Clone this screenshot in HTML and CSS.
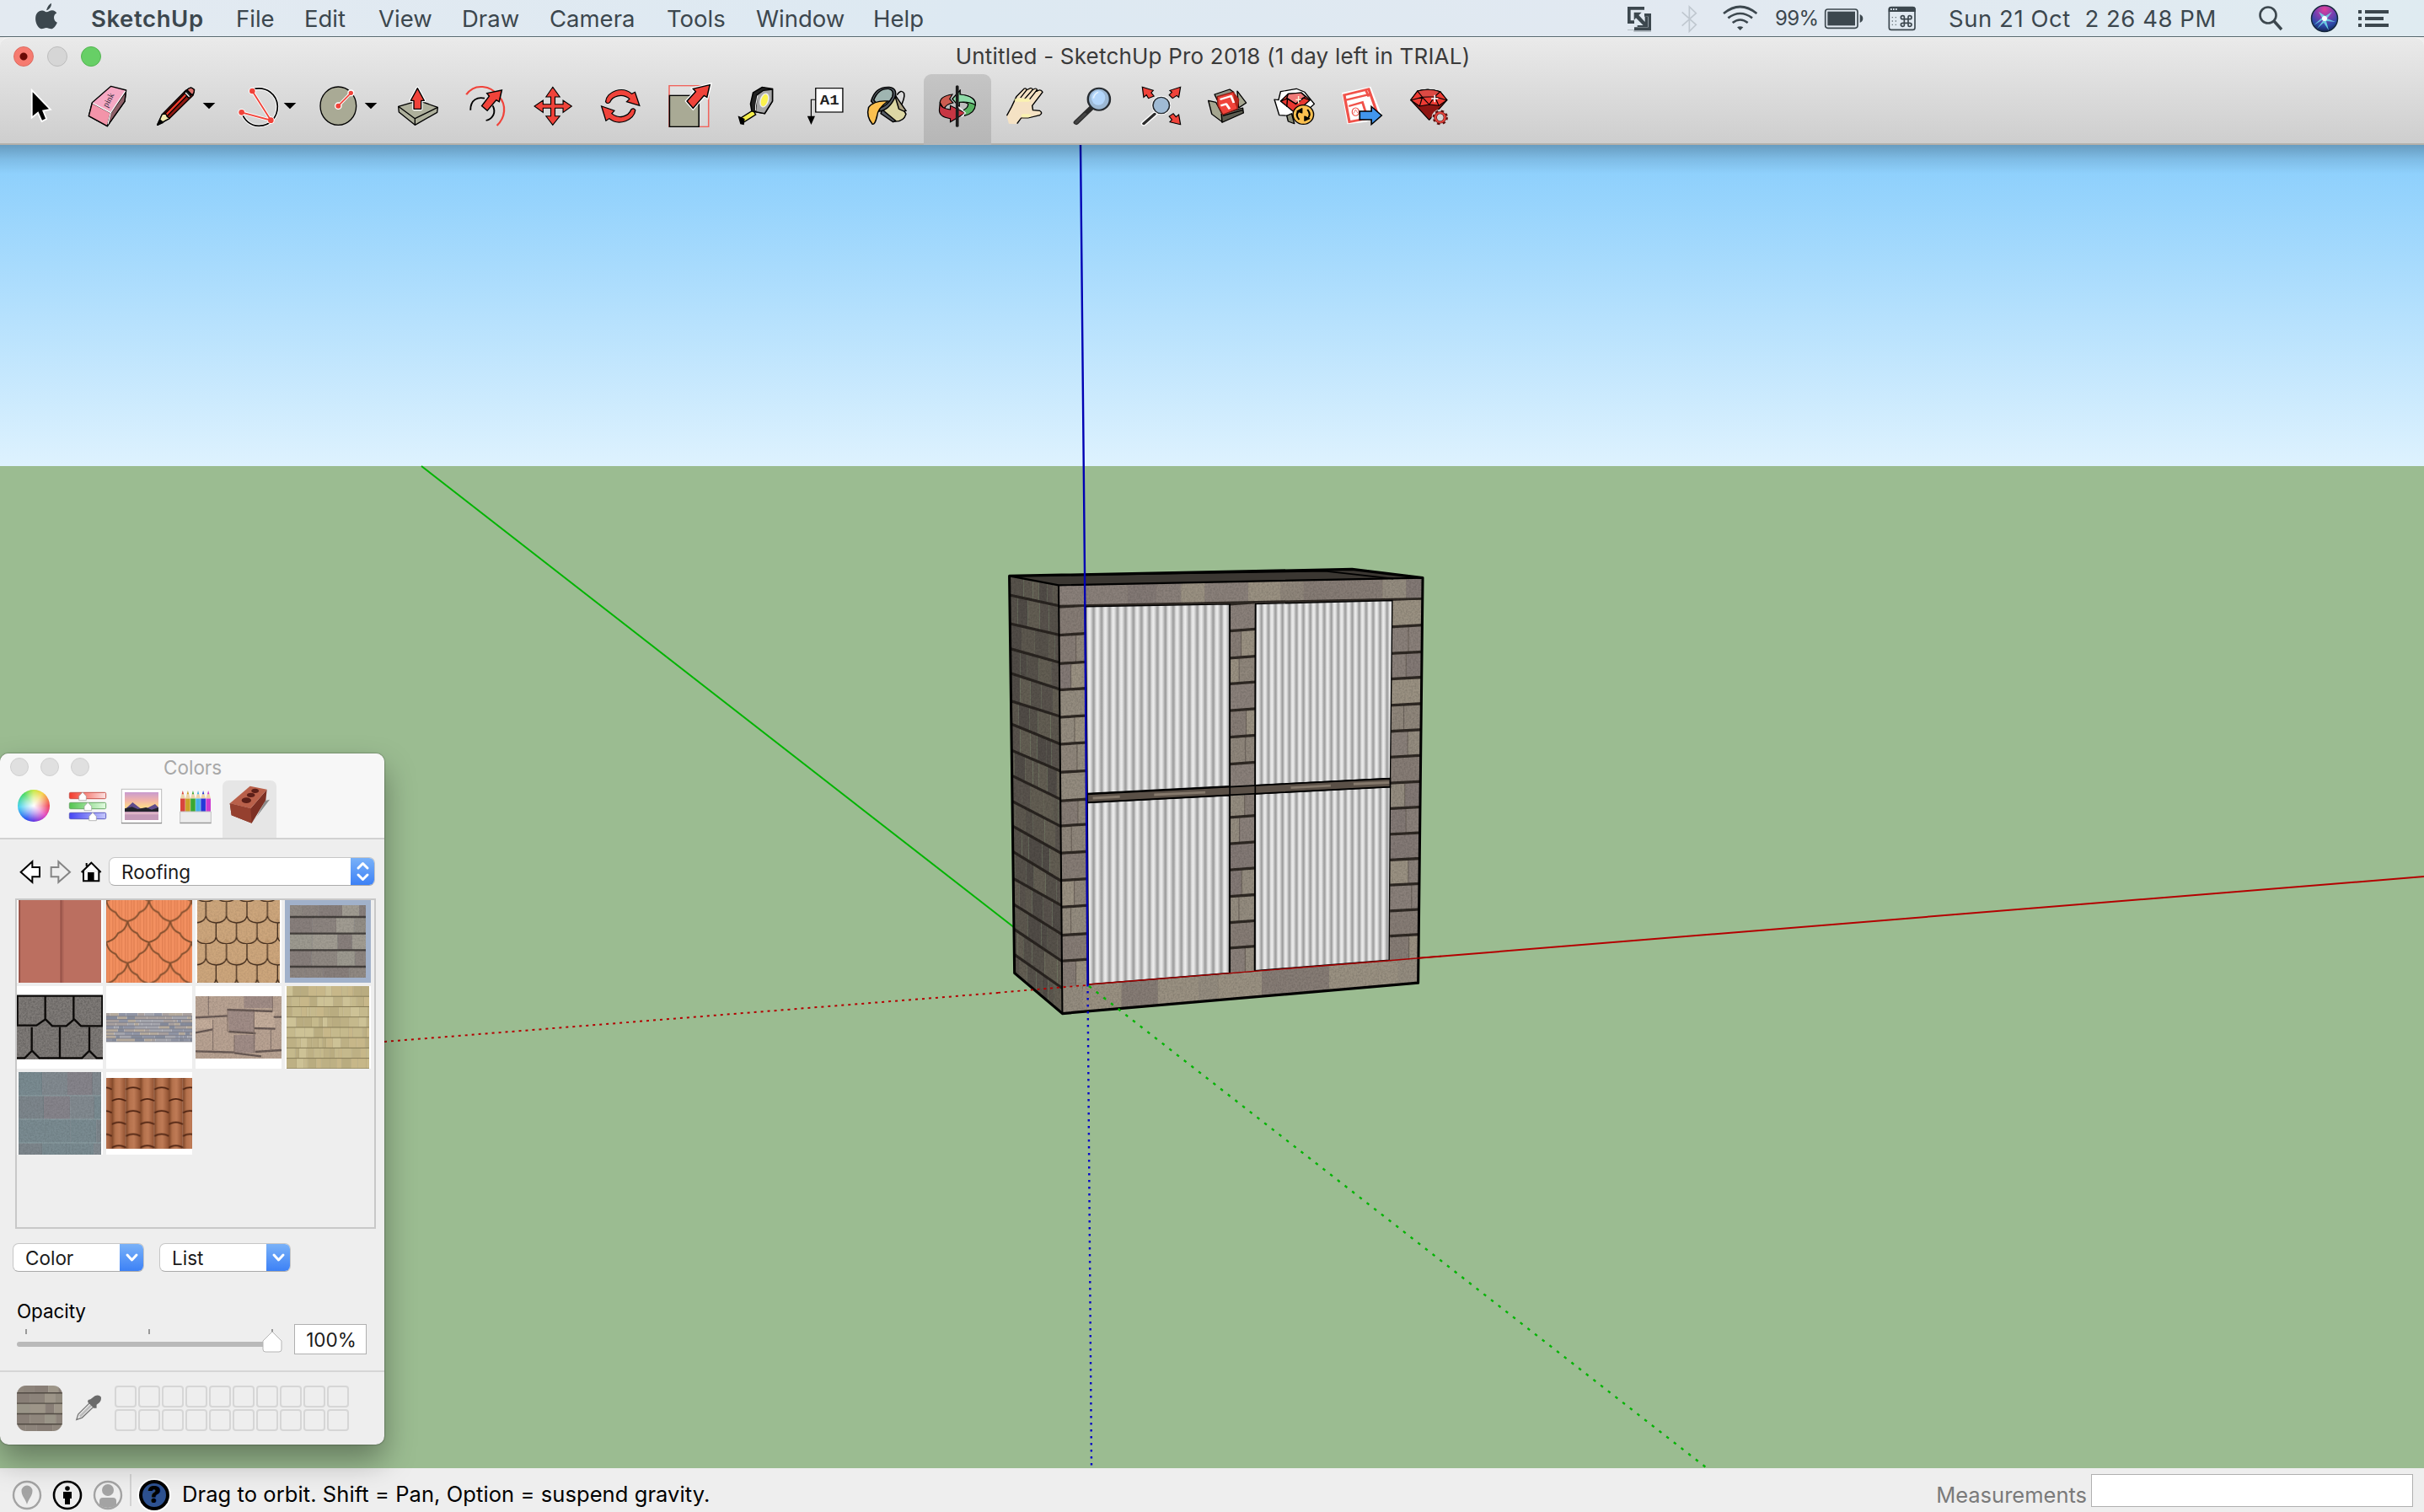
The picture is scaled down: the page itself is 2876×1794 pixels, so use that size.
FILE: index.html
```html
<!DOCTYPE html>
<html lang="en">
<head>
<meta charset="utf-8">
<title>Untitled - SketchUp Pro 2018</title>
<link rel="stylesheet" href="styles.css">
</head>
<body>
<header class="menubar">
  <svg class="apple" viewBox="72 10 48 100" preserveAspectRatio="none"><path d="M96 38C98 24 102 16 106 12C107 24 102 36 96 38ZM96 44C100 44 103 38 108 38C112 38 115 42 117 48C109 54 110 76 118 82C116 92 111 105 106 105C102 105 100 101 96 101C92 101 90 105 86 105C79 103 73 82 74 64C75 46 82 38 88 39C91 39 94 44 96 44Z"/></svg>
  <nav class="menus"><b>SketchUp</b><span>File</span><span>Edit</span><span>View</span><span>Draw</span><span>Camera</span><span>Tools</span><span>Window</span><span>Help</span></nav>
  <div class="extras">
    <svg class="x-par" viewBox="84 0 96 129"><g fill="#3c474e"><path d="M90 84V108H112V113H174V106H90Z" opacity=".35"/><path fill-rule="evenodd" d="M90 24H150V48H174V108H114V84H90ZM101 35V73H114V97H163V59H150V35Z"/><path d="M114 48H126L153 76V59H164V97H126L114 84Z" fill="#dfe9f1"/><path d="M113 44H140L130 54L152 78V58L163 59V97H125V90H146L120 64L113 72Z"/></g></svg>
    <svg class="x-bt" viewBox="278 0 63 129"><path d="M283 43L333 88L309 112V24L333 47L283 92" fill="none" stroke="#c0c8d0" stroke-width="5"/></svg>
    <svg class="x-wifi" viewBox="424 0 132 129"><g fill="none" stroke="#3c474e" stroke-width="8"><path d="M430 48Q489 0 548 48"/><path d="M446 64Q489 32 532 64"/><path d="M462 81Q489 60 516 81"/></g><path d="M478 97Q489 90 500 97L489 108Z" fill="#3c474e"/></svg>
    <span class="pct">99%</span>
    <svg class="x-bat" viewBox="790 0 144 129"><rect x="795" y="33" width="115" height="67" rx="9" fill="none" stroke="#3c474e" stroke-width="5"/><rect x="803" y="41" width="98" height="50" fill="#3c474e"/><path d="M918 51Q929 56 929 66Q929 76 918 81Z" fill="#3c474e"/></svg>
    <svg class="x-key" viewBox="1018 0 102 129"><rect x="1022" y="26" width="92" height="80" rx="8" fill="none" stroke="#3c474e" stroke-width="5"/><path d="M1020 42V32Q1020 24 1028 24H1108Q1116 24 1116 32V42Z" fill="#3c474e"/><path d="M1027 33h24" stroke="#dfe9f1" stroke-width="6" stroke-dasharray="5 4"/><path d="M1034 60v32M1046 60v32" stroke="#6d777d" stroke-width="4" stroke-dasharray="4 9"/><path fill="none" stroke="#3c474e" stroke-width="5" d="M1076 58V91Q1076 94 1071 94Q1064 94 1064 88Q1064 82 1071 82H1095Q1102 82 1102 88Q1102 94 1095 94Q1090 94 1090 89V62Q1090 56 1095 56Q1102 56 1102 62Q1102 68 1095 68H1071Q1064 68 1064 62Q1064 56 1071 56Q1076 56 1076 60"/></svg>
    <time class="clock">Sun 21 Oct&nbsp; 2 26 48 PM</time>
    <svg class="x-find" viewBox="0 0 34 43"><circle cx="14" cy="18" r="9.5" fill="none" stroke="#3c474e" stroke-width="2.6"/><path d="M21 25L30 35" stroke="#3c474e" stroke-width="3.4"/></svg>
    <svg class="x-siri" viewBox="0 0 34 43"><defs><radialGradient id="siri" cx=".5" cy=".15" r=".9"><stop offset="0" stop-color="#e0409c"/><stop offset=".4" stop-color="#7a3fb0"/><stop offset=".7" stop-color="#2a4aa8"/><stop offset="1" stop-color="#111c44"/></radialGradient></defs><circle cx="17" cy="22" r="15.5" fill="url(#siri)" stroke="#14283c" stroke-width="1.5"/><path d="M17 22L4 30L14 21L10 14L18 19L26 14L20 22L30 26L19 25L22 36L16 27L8 34Z" fill="#6fe0ea" opacity=".85"/><circle cx="17" cy="22" r="3" fill="#fff"/></svg>
    <svg class="x-list" viewBox="0 0 36 43"><g fill="#3c474e"><path d="M0 12h4v4h-4zM0 20h4v4h-4zM0 28h4v4h-4zM8 12h28v4H8zM8 20h22v4H8zM8 28h28v4H8z"/></g></svg>
  </div>
</header>

<section class="window-head">
  <div class="titlebar">
    <div class="lights"><i class="close"></i><i class="mini"></i><i class="full"></i></div>
    <h1>Untitled - SketchUp Pro 2018 (1 day left in TRIAL)</h1>
  </div>
  <div class="toolbar">
    <svg class="tool" viewBox="-36 0 240 252"><path d="M56 64V149L76 133L90 164L102 158L90 128L114 124Z" stroke="#fff" stroke-width="11"/><path d="M56 64V149L76 133L90 164L102 158L90 128L114 124Z"/></svg>
    <svg class="tool" viewBox="204 0 240 252" stroke="#000" stroke-width="4" stroke-linejoin="round"><path d="M335 43L389 57L384 97L322 185L256 149L268 101Z" fill="#f6a9c4"/><path d="M268 103L334 138L322 185L256 149Z" fill="#f394a9"/><path d="M334 138L388 62L384 97L322 185Z" fill="#8d6068"/><path d="M270 103L334 137L386 60M334 137L324 178" stroke="#fff" fill="none"/><text class="pink" transform="translate(322 120) rotate(-62)" stroke="none">pink</text></svg>
    <svg class="tool wide" viewBox="444 0 288 252" stroke="#000" stroke-width="4" stroke-linejoin="round"><path d="M500 181L517 143L602 57L620 48L632 56L628 74L544 157Z" fill="#8e1a12"/><path d="M522 146L606 60L614 68L532 152Z" fill="#ee3a2b"/><path d="M500 181L517 143L530 141L535 151L544 157Z" fill="#f3ebb2"/><path d="M500 181L509 162L521 172Z" fill="#000"/><path d="M596 64L606 58L620 72L610 84Z" fill="#222"/><path d="M600 66L614 80" stroke="#fff"/><path d="M606 56Q618 42 630 54Q634 64 624 74Z" fill="#d8716c"/><path d="M662 102H706L684 124Z" fill="#000" stroke="none"/></svg>
    <svg class="tool wide" viewBox="732 0 288 252" fill="none"><path d="M838 54C890 40 926 74 928 114C928 150 904 184 862 184C830 184 808 162 800 136" stroke="#fff" stroke-width="11"/><path d="M838 54C890 40 926 74 928 114C928 150 904 184 862 184C830 184 808 162 800 136" stroke="#000" stroke-width="5"/><path d="M838 60L904 164L800 136" stroke="#fff" stroke-width="11"/><g fill="#fff"><circle cx="838" cy="60" r="13"/><circle cx="904" cy="164" r="13"/><circle cx="800" cy="136" r="13"/></g><path d="M838 60L904 164L800 136" stroke="#f0433a" stroke-width="5.5"/><g fill="#f0433a"><circle cx="838" cy="60" r="10"/><circle cx="904" cy="164" r="10"/><circle cx="800" cy="136" r="10"/></g><path d="M950 102H994L972 124Z" fill="#000"/></svg>
    <svg class="tool wide" viewBox="1020 0 288 252"><ellipse cx="1144" cy="113" rx="64" ry="68" fill="#a9aa95" stroke="#000" stroke-width="4"/><path d="M1144 113L1189 67" stroke="#fff" stroke-width="11"/><g fill="#f0433a" stroke="#fff" stroke-width="4"><circle cx="1144" cy="113" r="11"/><circle cx="1189" cy="67" r="10"/></g><path d="M1144 113L1189 67" stroke="#f0433a" stroke-width="5"/><path d="M1238 102H1282L1260 124Z"/></svg>
    <svg class="tool" viewBox="1308 0 240 252" stroke="#000" stroke-width="4" stroke-linejoin="round"><path d="M1358 115L1430 94L1498 118L1496 136L1417 181L1360 135Z" fill="#aeb09c"/><path d="M1358 115L1417 158L1498 118M1417 158V181" fill="none"/><path d="M1426 50L1450 94H1439V124H1413V94H1402Z" stroke="#fff" stroke-width="11"/><path d="M1426 50L1450 94H1439V124H1413V94H1402Z" fill="#f0433a"/></svg>

    <svg class="tool" viewBox="94 0 209 252" preserveAspectRatio="none" fill="none"><path d="M139 73C165 30 215 40 240 78C265 110 260 155 234 183" stroke="#f0433a" stroke-width="6"/><path d="M152 128C152 90 175 80 196 86M221 112C232 135 222 160 200 165" stroke="#000" stroke-width="5"/><path d="M249 57L241 98L232 92L204 130L187 113L210 78L203 68Z" fill="#f0433a" stroke="#000" stroke-width="4"/></svg>
    <svg class="tool" viewBox="303 0 209 252" preserveAspectRatio="none"><path d="M407 46L429 81H414V107H439V93L466 114L439 136V121H414V149H429L407 181L386 149H401V121H377V136L350 114L377 93V107H401V81H386Z" fill="#f0433a" stroke="#000" stroke-width="3"/></svg>
    <svg class="tool" viewBox="512 0 209 252" preserveAspectRatio="none" fill="#f0433a" stroke="#000" stroke-width="3.5"><path d="M571 98C574 62 622 40 652 70L662 64L676 112L636 98L645 88C622 66 592 78 584 100Q576 108 571 98Z"/><path d="M663 128C660 164 612 186 582 158L572 166L558 114L598 130L590 140C612 162 642 150 650 126Q658 118 663 128Z"/></svg>
    <svg class="tool" viewBox="721 0 209 252" preserveAspectRatio="none"><rect x="768" y="41" width="122" height="146" fill="#fff" fill-opacity=".15" stroke="#f0635c" stroke-width="4"/><rect x="769" y="76" width="91" height="111" fill="#a9aa95" stroke="#000" stroke-width="4"/><path d="M894 38L885 82L876 76L842 121L823 96L850 62L842 52Z" fill="#f0433a" stroke="#fff" stroke-width="11"/><path d="M894 38L885 82L876 76L842 121L823 96L850 62L842 52Z" fill="#f0433a" stroke="#000" stroke-width="4"/></svg>
    <svg class="tool" viewBox="930 0 209 252" preserveAspectRatio="none" stroke="#000" stroke-width="4"><path d="M1028 128L990 156L998 172L1036 144Z" fill="#f4ee4c"/><path d="M984 152L1000 160L998 178L990 176Z"/><path d="M1020 106L1028 66L1056 46L1088 52V96L1064 140L1024 132Z" fill="#222"/><path d="M1040 74L1060 58L1088 54V96L1064 140L1036 134Z" fill="#a7a7a7"/><path d="M1042 76L1036 112V130" stroke="#e8e8e8" stroke-width="3" fill="none"/><ellipse cx="1063" cy="93" rx="12" ry="24" transform="rotate(14 1063 93)" fill="#fbf34c" stroke="#eee"/></svg>
    <svg class="tool" viewBox="1139 0 209 252" preserveAspectRatio="none"><rect x="1222" y="50" width="84" height="85" fill="#fff" stroke="#000" stroke-width="3.5"/><path d="M1221 91H1208V150" fill="none" stroke="#000" stroke-width="3"/><path d="M1196 149H1220L1208 180Z"/><text class="a1" x="1235" y="107">A1</text></svg>
    <svg class="tool" viewBox="1348 0 209 252" preserveAspectRatio="none" stroke="#000" stroke-width="4"><path d="M1474 74Q1486 52 1496 68Q1500 84 1482 124" fill="none"/><path d="M1424 130L1466 70L1502 142Q1494 172 1462 168Z" fill="#dcd7a4"/><path d="M1466 70L1474 84L1502 130L1496 132L1480 124Z" fill="#a99f80"/><path d="M1428 126L1470 166L1462 170L1424 140Z" fill="#555b63"/><path d="M1394 96Q1406 44 1450 46Q1476 50 1468 82Q1450 128 1420 132Z" fill="#545b63"/><path d="M1402 92Q1416 50 1448 52Q1466 56 1460 80Q1446 110 1422 120Z" fill="#9fb5b1"/><path d="M1446 96Q1404 92 1386 118Q1378 150 1398 178Q1406 180 1412 150Q1414 122 1446 96Z" fill="#fbc04f"/></svg>

    <svg class="tool active" viewBox="14.7 12 196 252" preserveAspectRatio="none" stroke="#000" stroke-width="3"><path d="M98 100L120 70V84Q166 90 165 120Q164 150 134 160L130 140Q144 132 144 118Q136 110 118 112V128Z" fill="#57b262"/><path d="M98 100L120 70V84Q166 90 165 122Q146 108 118 112V128Z" fill="#8fdba8"/><path d="M62 114Q62 90 98 84L90 100L100 114Q76 120 74 138Z" fill="#cc5c50"/><path d="M62 112Q62 134 92 138V124L136 150L92 182V170Q58 164 60 138Z" fill="#c73643"/><path d="M112 56V196" stroke-width="9" stroke="#1c1c1c" stroke-linecap="round"/><path d="M116 128L136 150L124 164" fill="none" stroke="#eee" stroke-width="4"/></svg>
    <svg class="tool" viewBox="210.7 12 196 252" preserveAspectRatio="none"><path d="M256 160L270 128L284 92L306 64Q312 60 314 68L324 62Q330 60 331 68Q342 58 344 68L342 74Q354 62 360 76L330 124L332 140L352 142Q362 150 352 158L318 168L292 174L284 190L262 188Z" fill="#f5e2c4"/><path d="M256 160L270 128L284 92L306 64Q312 60 314 68L296 96M314 68L324 62Q330 60 331 68L308 100M331 68Q342 58 344 68L322 102M342 74Q354 62 360 76L330 124L332 140L352 142Q362 150 352 158L318 168L298 168L286 188" fill="none" stroke="#000" stroke-width="3.5"/><path d="M284 104h34M304 160h16" stroke="#fdf9a8" stroke-width="12" opacity=".7" stroke-linecap="round"/></svg>
    <svg class="tool" viewBox="406.7 12 196 252" preserveAspectRatio="none"><path d="M502 132L458 184" stroke="#2b2b2b" stroke-width="16" stroke-linecap="round"/><path d="M484 154L458 184" stroke="#444" stroke-width="9" stroke-linecap="round"/><ellipse cx="524" cy="101" rx="32" ry="39" fill="#9cb8d4" stroke="#262b30" stroke-width="6"/><ellipse cx="522" cy="96" rx="20" ry="26" fill="#b3d6fb"/><path d="M508 98Q510 82 522 76" fill="none" stroke="#e4f3ff" stroke-width="4"/></svg>
    <svg class="tool" viewBox="602.7 12 196 252" preserveAspectRatio="none"><g fill="#f0433a" stroke="#000" stroke-width="3"><path d="M650 58L682 70L676 78L684 90L668 98L662 86L654 94Z"/><path d="M761 58L756 94L750 88L738 98L728 86L736 76L730 70Z"/><path d="M761 191L730 182L736 174L728 162L740 152L748 164L756 156Z"/></g><path d="M686 154L654 188" stroke="#fff" stroke-width="16" stroke-linecap="round"/><ellipse cx="705" cy="123" rx="28" ry="34" fill="#fff"/><path d="M686 154L654 188" stroke="#2b2b2b" stroke-width="9" stroke-linecap="round"/><ellipse cx="705" cy="123" rx="24" ry="29" fill="#9fbad4" stroke="#262b30" stroke-width="4"/></svg>
    <svg class="tool" viewBox="798.7 12 196 252" preserveAspectRatio="none" stroke="#000" stroke-width="3.5" stroke-linejoin="round"><path d="M860 84L904 66L916 76L868 104Z" fill="#8f9184"/><path d="M842 106L864 112L882 154V182L852 154Z" fill="#a5a690"/><path d="M926 72L952 114L930 132Z" fill="#a5a690"/><path d="M880 154L942 132L944 150L882 184Z" fill="#5c5c50"/><path d="M868 92L914 76L930 102L926 136L884 156L870 124Z" fill="#f0433a" stroke="#8e1a12"/><path d="M914 76L930 102L926 136L918 112Z" fill="#b3261c" stroke="none"/><path d="M876 102L908 90L916 114M878 124L894 118L904 136" fill="none" stroke="#fff" stroke-width="7"/><path d="M884 160L942 140" fill="none"/></svg>
    <svg class="tool" viewBox="994.7 12 196 252" preserveAspectRatio="none" stroke="#000" stroke-width="3.5" stroke-linejoin="round"><path d="M1052 74L1098 64L1122 76L1150 118L1130 140L1080 160L1048 158L1034 102L1046 104Z" fill="#fff"/><path d="M1070 160L1084 152L1092 188L1074 180Z" fill="#8a8b78"/><path d="M1052 108L1074 82L1112 78L1138 104L1094 150Z" fill="#e8372f"/><path d="M1074 82L1112 78L1124 92L1096 118L1070 98Z" fill="#f07a78"/><path d="M1054 108L1072 98L1096 118L1118 96L1136 104M1072 98L1070 128" fill="none"/><path d="M1104 90V116M1096 103H1112" stroke="#fff6d8"/><ellipse cx="1118" cy="156" rx="30" ry="34" fill="#fbc04f"/><path d="M1106 174Q1092 154 1108 140M1130 138Q1144 158 1128 172" fill="none" stroke-width="5"/><path d="M1100 144L1114 134L1114 150ZM1136 170L1122 178V162Z" fill="#000"/></svg>
    <svg class="tool" viewBox="1190.7 12 196 252" preserveAspectRatio="none"><path d="M1230 78L1314 56L1348 162L1300 182L1246 190Z" fill="#fff"/><path d="M1237 86L1308 65L1336 162L1252 182Z" fill="#fff" stroke="#f0524a" stroke-width="8"/><path d="M1242 104L1316 82M1300 70L1308 92M1250 126L1290 112L1300 150" fill="none" stroke="#f0524a" stroke-width="7"/><ellipse cx="1270" cy="146" rx="10" ry="14" fill="none" stroke="#f0524a" stroke-width="3"/><path d="M1264 152L1270 138L1276 150" fill="none" stroke="#f0524a" stroke-width="2"/><path d="M1282 144H1316V127L1346 159L1316 191V174H1282Z" fill="#4296ee" stroke="#000" stroke-width="4"/></svg>
    <svg class="tool" viewBox="1386.7 12 196 252" preserveAspectRatio="none" stroke="#000" stroke-width="3" stroke-linejoin="round"><path d="M1430 104L1450 72Q1482 60 1516 74L1536 104L1484 175Z" fill="#8e1512"/><path d="M1430 104L1450 72Q1482 60 1516 74L1536 104L1512 124L1484 120L1456 126Z" fill="#ee3b33"/><path d="M1450 72Q1482 60 1516 74L1500 92L1464 94Z" fill="#dc4a44"/><path d="M1432 104L1464 94L1484 120L1500 92L1534 104M1464 94L1456 126M1500 92L1512 124" fill="none"/><path d="M1500 86V112M1490 99H1510" stroke="#fff" stroke-width="4"/><ellipse cx="1516" cy="166" rx="18" ry="22" fill="none" stroke="#d4d4d4" stroke-width="14"/><ellipse cx="1516" cy="166" rx="18" ry="22" fill="none" stroke="#5a1210" stroke-width="9" stroke-dasharray="8 8"/><ellipse cx="1516" cy="166" rx="14" ry="17" fill="none" stroke="#5a1210" stroke-width="9"/><ellipse cx="1516" cy="166" rx="14" ry="17" fill="none" stroke="#e2443d" stroke-width="6"/></svg>
  </div>
</section>

<main class="viewport">
  <svg class="scene" viewBox="0 172 2876 1570" preserveAspectRatio="none">
    <defs>
      <linearGradient id="sky" x1="0" y1="0" x2="0" y2="1"><stop offset="0" stop-color="#87cdfc"/><stop offset="1" stop-color="#def2fe"/></linearGradient>
      <linearGradient id="castShade" x1="0" y1="0" x2="0" y2="1"><stop offset="0" stop-opacity=".24"/><stop offset=".5" stop-opacity=".09"/><stop offset="1" stop-opacity="0"/></linearGradient>
      <linearGradient id="ribL" gradientUnits="userSpaceOnUse" x1="328" x2="356" y1="0" y2="0" spreadMethod="repeat"><stop offset="0" stop-color="#dedede"/><stop offset=".22" stop-color="#ececec"/><stop offset=".4" stop-color="#d2d2d2"/><stop offset=".68" stop-color="#9c9c9c"/><stop offset=".85" stop-color="#b4b4b4"/><stop offset="1" stop-color="#dedede"/></linearGradient>
      <linearGradient id="ribR" gradientUnits="userSpaceOnUse" x1="920" x2="944.5" y1="0" y2="0" spreadMethod="repeat"><stop offset="0" stop-color="#dedede"/><stop offset=".22" stop-color="#ececec"/><stop offset=".4" stop-color="#d2d2d2"/><stop offset=".68" stop-color="#9c9c9c"/><stop offset=".85" stop-color="#b4b4b4"/><stop offset="1" stop-color="#dedede"/></linearGradient>
      <filter id="grain" x="0" y="0" width="1" height="1"><feTurbulence type="fractalNoise" baseFrequency=".16" numOctaves="3" seed="4"/><feColorMatrix values="0 0 0 0 0  0 0 0 0 0  0 0 0 0 0  1.6 0 0 0 -.55"/><feComposite in2="SourceGraphic" operator="in"/></filter>
    </defs>
    <rect y="172" width="2876" height="382" fill="url(#sky)"/>
    <rect y="553" width="2876" height="1190" fill="#9bbc91"/>
    <g fill="none" stroke-width="2">
      <path d="M500 553L1204 1101" stroke="#00b400"/>
      <path d="M1680 1137L2876 1040" stroke="#b40000"/>
      <path d="M456 1236L1184 1178" stroke="#b40000" stroke-dasharray="3 5"/>
    </g>
    <svg x="1180" y="650" width="530" height="570" viewBox="0 0 1568 1568" preserveAspectRatio="none">
      <defs>
        <clipPath id="sideFace"><path d="M52 92L225 122L238 1520L70 1388Z"/></clipPath>
        <clipPath id="frontFace"><path d="M225 122L1503 98L1487 1420L238 1520Z"/></clipPath>
      </defs>
      <g id="side" clip-path="url(#sideFace)"></g>
      <g id="front" clip-path="url(#frontFace)"></g>
      <path d="M52 92L225 122L1503 98L1487 1420L238 1520L70 1388Z" filter="url(#grain)" opacity=".16"/>
      <path d="M52 92L1255 70L1503 98L225 122Z" fill="#3b3732"/>
      <path d="M60 92L1160 76L1400 101" fill="none" stroke="#000" stroke-width="5"/>
      <g stroke="#000" stroke-width="4">
        <path d="M320 192L826 184V778L326 802Z" fill="url(#ribL)"/>
        <path d="M326 832L826 808L824 1388L330 1425Z" fill="url(#ribL)"/>
        <path d="M916 183L1396 172L1389 752L915 775Z" fill="url(#ribR)"/>
        <path d="M915 803L1389 780L1385 1346L914 1380Z" fill="url(#ribR)"/>
        <path d="M826 184V1388M916 183L913 1382" stroke-width="5"/>
        <path d="M326 804L1389 753V780L326 831Z" fill="#5a5047" stroke-width="5"/>
        <path d="M345 817L440 812M560 806L740 798M1040 783L1180 776M1260 771L1385 766" stroke="#85796c" stroke-width="8"/>
        <path d="M826 780V808M915 776V803" stroke-width="5"/>
      </g>
      <g fill="none" stroke="#000" stroke-linejoin="round"><path d="M52 92L1255 70L1503 98L1487 1420L238 1520L70 1388Z" stroke-width="9"/><path d="M52 92L225 122L1503 98M225 122L238 1520" stroke-width="6"/></g>
      <path d="M330 1425L1385 1347L1568 1333" fill="none" stroke="#a80000" stroke-width="4"/>
      <path d="M12 1452L330 1427" stroke="#b40000" stroke-width="5" stroke-dasharray="9 14"/>
    </svg>
    <g fill="none" stroke-width="2.4">
      <path d="M1282 172L1287 680L1290.5 1168" stroke="#0000b4"/>
      <path d="M1290.500 1168L1295 1740" stroke="#0000c8" stroke-dasharray="2.500 5.500"/>
      <path d="M1292 1170L2024 1741" stroke="#00b400" stroke-dasharray="3.500 7.500"/>
    </g>
    <rect y="172" width="2876" height="34" fill="url(#castShade)"/>
  </svg>
</main>

<footer class="status">
  <svg class="s-ico" viewBox="13 1754 38 38"><circle cx="32" cy="1774" r="16" fill="none" stroke="#a3a3a3" stroke-width="2.4"/><path d="M32 1785C30 1778 25.500 1775 25.500 1769A6.500 6.500 0 0 1 38.500 1769C38.500 1775 34 1778 32 1785Z" fill="#a3a3a3"/></svg>
  <svg class="s-ico" viewBox="61 1754 38 38"><circle cx="80" cy="1774" r="16" fill="none" stroke="#000" stroke-width="2.6"/><circle cx="80" cy="1766" r="2.800"/><path d="M75 1770h10v8h-2v7h-6v-7h-2z"/></svg>
  <svg class="s-ico" viewBox="109 1754 38 38"><circle cx="128" cy="1774" r="16" fill="none" stroke="#a3a3a3" stroke-width="2.4"/><circle cx="128" cy="1768" r="7" fill="#a3a3a3"/><path d="M118 1786V1781Q118 1777 122 1777H134Q138 1777 138 1781V1786Q128 1792 118 1786Z" fill="#a3a3a3"/></svg>
  <i class="rule"></i>
  <div class="help">?</div>
  <span class="hint">Drag to orbit. Shift = Pan, Option = suspend gravity.</span>
  <span class="measure">Measurements</span>
  <div class="vcb"></div>
</footer>

<aside class="palette">
  <div class="p-head">
    <div class="p-title"><div class="dots"><i></i><i></i><i></i></div><h2>Colors</h2></div>
    <div class="tabs">
      <div class="tab"><div class="wheel"></div></div>
      <svg class="tab" viewBox="216 108 192 204"><g stroke-width="3"><rect x="247" y="151" width="130" height="22" rx="4" fill="url(#sr)" stroke="#c8564e"/><rect x="247" y="187" width="130" height="22" rx="4" fill="url(#sg)" stroke="#6aa868"/><rect x="247" y="223" width="130" height="22" rx="4" fill="url(#sb)" stroke="#5c5cc0"/></g><g fill="#fff" stroke="#999" stroke-width="2"><path d="M294 150L307 164V179H281V164Z"/><path d="M313 186L326 200V215H300V200Z"/><path d="M330 222L343 236V251H317V236Z"/></g><defs><linearGradient id="sr"><stop stop-color="#f33b2c"/><stop offset="1" stop-color="#fbe3e3"/></linearGradient><linearGradient id="sg"><stop stop-color="#53c450"/><stop offset="1" stop-color="#e3fbe1"/></linearGradient><linearGradient id="sb"><stop stop-color="#4545f3"/><stop offset="1" stop-color="#c6c8fb"/></linearGradient></defs></svg>
      <svg class="tab" viewBox="408 108 192 204"><defs><linearGradient id="dusk" x1="0" x2="0" y1="0" y2="1"><stop stop-color="#c99bcf"/><stop offset=".3" stop-color="#f2b4a8"/><stop offset=".5" stop-color="#fbd48e"/></linearGradient></defs><rect x="433" y="139" width="142" height="121" fill="#fff" stroke="#bdbdbd" stroke-width="3"/><path d="M432 260H576" stroke="#7d7d7d" stroke-width="3"/><rect x="444" y="150" width="120" height="99" fill="url(#dusk)"/><path d="M444 212L472 186L500 208L524 206L552 192L564 204V222H444Z" fill="#5f4c8c"/><path d="M444 208L470 202L490 210L520 204L540 212L564 204V222H444Z" fill="#23242c"/><rect x="444" y="219" width="120" height="30" fill="#c49ab8"/><path d="M444 226H564" stroke="#e0b8c8" stroke-width="6"/></svg>
      <svg class="tab" viewBox="600 108 192 204"><g id="pencils"></g><path d="M641 219H751V258H641Z" fill="#ececec" stroke="#c2c2c2" stroke-width="3"/><path d="M640 260H752" stroke="#8a8a8a" stroke-width="3"/></svg>
      <svg class="tab on" viewBox="792 108 192 204"><path d="M896 260L960 176L944 180L912 240Z" fill="#000" opacity=".4"/><path d="M818 190L892 208L950 140L946 178L896 260L824 232Z" fill="#7d3024"/><path d="M818 190L890 128L950 140L892 208Z" fill="#b9604a"/><path d="M818 190L892 208L896 260L824 232Z" fill="#95402f"/><g fill="#5c1f18"><ellipse cx="908" cy="145" rx="13" ry="8"/><ellipse cx="893" cy="160" rx="14" ry="8"/><ellipse cx="877" cy="179" rx="17" ry="10"/></g></svg>
    </div>
  </div>
  <div class="p-body">
    <div class="nav-row">
      <svg class="n-ico" viewBox="66 384 84 100"><path d="M74 436L115 399V419H141V453H115V472Z" fill="#fff" stroke="#000" stroke-width="6"/></svg>
      <svg class="n-ico" viewBox="174 384 84 100"><path d="M249 436L208 399V419H182V453H208V472Z" fill="none" stroke="#858585" stroke-width="6"/></svg>
      <svg class="n-ico" viewBox="282 384 84 100"><path d="M290 437L325 403L359 437M297 430V468H352V430M308 404V415" fill="#fff" stroke="#000" stroke-width="6"/><path d="M312 437H335V470H312Z"/></svg>
      <div class="select library"><span>Roofing</span><b><svg viewBox="0 0 29 34"><path d="M9 13L14.500 7.500L20 13M9 21L14.500 26.500L20 21" fill="none" stroke="#fff" stroke-width="3" stroke-linecap="round" stroke-linejoin="round"/></svg></b></div>
    </div>
    <div class="swatches">
      <svg class="tile" viewBox="60 534 306 294"><rect x="66" y="534" width="294" height="294" fill="#bb6f60"/><path d="M70 534V828M217 534V828" stroke="#8d4b42" stroke-width="4"/><path d="M223 534V828" stroke="#a55e52" stroke-width="5"/></svg>
      <svg class="tile" viewBox="378 534 306 294"><defs><pattern id="stripes" width="22" height="10" patternUnits="userSpaceOnUse" x="378"><rect width="22" height="10" fill="#f39060"/><path d="M2 0V10M11 0V10" stroke="#dc7a4c" stroke-width="3"/></pattern><pattern id="wave" width="152" height="148" x="378" y="536" patternUnits="userSpaceOnUse"><path d="M0 0Q8 34 34 42Q44 66 76 74Q108 66 118 42Q144 34 152 0M-76 74Q-68 108 -42 116Q-32 140 0 148Q32 140 42 116Q68 108 76 74Q84 108 110 116Q120 140 152 148" fill="none" stroke="#85502f" stroke-width="6"/><path d="M-10 148Q0 150 10 146M142 146Q152 150 160 146M-10 -2Q0 2 10 -2M142 -2Q152 2 160 -2" stroke="#85502f" stroke-width="5" fill="none"/></pattern></defs><rect x="378" y="534" width="306" height="294" fill="url(#stripes)"/><rect x="378" y="534" width="306" height="294" fill="url(#wave)"/></svg>
      <svg class="tile" viewBox="696 534 306 294"><defs><pattern id="fish" width="73" height="150" x="733" y="540" patternUnits="userSpaceOnUse"><rect width="73" height="150" fill="#cda67c"/><path d="M36 0V50Q36 66 24 72H49Q36 66 36 50M0 75V125Q4 148 36 150H0ZM73 75V125Q68 148 36 150H73Z" fill="#b48b62" opacity=".45"/><path d="M0 0V50Q4 73 36 75Q68 73 73 50V0M-37 75V125Q-33 148 0 150Q33 148 36 125V75M36 75V125Q40 148 73 150" fill="none" stroke="#4a3322" stroke-width="4"/></pattern></defs><rect x="702" y="534" width="294" height="294" fill="url(#fish)"/><rect x="702" y="534" width="294" height="294" filter="url(#grain)" opacity=".1"/></svg>
      <svg class="tile picked" viewBox="1014 534 306 294"><g id="asphalt"></g><rect x="1032" y="552" width="270" height="258" filter="url(#grain)" opacity=".12"/></svg>
      <svg class="tile" viewBox="60 840 306 294"><rect x="60" y="873" width="306" height="228" fill="#7f7b78"/><rect x="60" y="873" width="306" height="228" filter="url(#grain)" opacity=".25"/><path d="M60 875H366M161 873V958M262 873V958M60 980H130L162 958L186 982H236L264 958L288 982H366M113 986V1068M213 986V1098M318 986V1068M60 1096H88L114 1070L140 1096H292L318 1070L344 1096H366M62 873V980M364 873V980" fill="none" stroke="#0c0a09" stroke-width="7"/></svg>
      <svg class="tile" viewBox="378 840 306 294"><g id="strips"></g></svg>
      <svg class="tile" viewBox="696 840 306 294"><rect x="696" y="876" width="306" height="222" fill="#b9a393"/><path d="M810 922H904V1004H816ZM868 876H970V918H868ZM834 1014H908V1078H834Z" fill="#a18d87"/><path d="M696 960H756V990H696ZM906 930H978V990H906Z" fill="#c5ae9c"/><path d="M696 952L810 946M808 924L970 930M696 1006L758 994M814 1002L910 1008M904 990L980 992M696 1072L834 1076M834 1078L930 1090M908 1074L1002 1068M974 950H1002" fill="none" stroke="#6a5b56" stroke-width="7"/><path d="M742 876V944M758 960V1068M810 930V1004M904 930V1076M834 1014V1078M970 876V930M964 996V1070" stroke="#84726a" stroke-width="3"/><rect x="696" y="876" width="306" height="222" filter="url(#grain)" opacity=".14"/></svg>
      <svg class="tile" viewBox="1014 840 306 294"><g id="shakes"></g></svg>
      <svg class="tile" viewBox="60 1146 306 294"><g id="slate"></g><rect x="66" y="1146" width="294" height="294" filter="url(#grain)" opacity=".12"/></svg>
      <svg class="tile" viewBox="378 1146 306 294"><defs><linearGradient id="tube"><stop stop-color="#7d4527"/><stop offset=".25" stop-color="#b4714c"/><stop offset=".55" stop-color="#bf7b56"/><stop offset="1" stop-color="#8f5030"/></linearGradient><pattern id="barrel" width="101.500" height="83" x="398" y="1162" patternUnits="userSpaceOnUse"><rect width="50" height="83" fill="url(#tube)"/><rect x="50" width="52" height="83" fill="url(#tube)"/><path d="M0 87Q25 72 50 87M0 4Q25 -10 50 4M50 46Q76 32 102 46" fill="none" stroke="#4a200f" stroke-width="5"/></pattern></defs><rect x="378" y="1167" width="306" height="252" fill="url(#barrel)"/></svg>
    </div>
    <div class="popups"><div class="select short"><span>Color</span><b><svg viewBox="0 0 29 34"><path d="M9 14L14.500 20L20 14" fill="none" stroke="#fff" stroke-width="3" stroke-linecap="round" stroke-linejoin="round"/></svg></b></div><div class="select short"><span>List</span><b><svg viewBox="0 0 29 34"><path d="M9 14L14.500 20L20 14" fill="none" stroke="#fff" stroke-width="3" stroke-linecap="round" stroke-linejoin="round"/></svg></b></div></div>
    <div class="op-label">Opacity</div>
    <div class="op-row">
      <svg class="slider" viewBox="20 1570 320 38"><path d="M31 1577V1583M177 1577V1583M323 1577V1583" stroke="#999" stroke-width="2"/><path d="M23 1595H330" stroke="#b9b9b9" stroke-width="6" stroke-linecap="round"/><path d="M323 1580L334 1591V1601Q334 1604 331 1604H315Q312 1604 312 1601V1591Z" fill="#fff" stroke="#b5b5b5" stroke-width="1"/></svg>
      <div class="pct-field">100%</div>
    </div>
  </div>
  <div class="p-foot">
    <svg class="current" viewBox="1032 552 270 258" preserveAspectRatio="none"><use href="#asphalt"/><rect x="1032" y="552" width="270" height="258" fill="#8a7a60" opacity=".18"/></svg>
    <svg class="dropper" viewBox="264 1120 102 106"><path d="M272 1215L278 1196L322 1152L336 1166L292 1208Z" fill="#ececec" stroke="#777" stroke-width="4"/><path d="M284 1204L326 1162" stroke="#bbb" stroke-width="8"/><path d="M314 1144L322 1142L338 1130Q352 1124 360 1134Q362 1146 354 1154L344 1162L344 1174L334 1174L312 1152Z" fill="#6b6b6b"/></svg>
    <div class="wells"><i></i><i></i><i></i><i></i><i></i><i></i><i></i><i></i><i></i><i></i><i></i><i></i><i></i><i></i><i></i><i></i><i></i><i></i><i></i><i></i></div>
  </div>
</aside>
<script src="scene.js"></script>
</body>
</html>
```
FILE: styles.css
```css
* { box-sizing: border-box; margin: 0; padding: 0; }
html, body { width: 2876px; height: 1794px; overflow: hidden; }
body { display: flex; flex-direction: column; font-family: Inter, "Liberation Sans", sans-serif; background: #eee; position: relative; }
svg { display: block; flex: none; }
span, h1, h2, b, time { white-space: pre; flex: none; }

.menubar { height: 44px; flex: none; display: flex; align-items: stretch; background: linear-gradient(90deg, #e3eaf1, #dde9f2 40%, #e2e9f1 70%, #dfebf1); border-bottom: 1px solid #55666c; color: #3c474e; font-size: 27.5px; line-height: 44px; }
.apple { width: 28px; height: 33px; margin: 3px 0 0 41px; fill: #3c474e; }
.menus { display: grid; grid-template-columns: 172px 81px 88px 99px 104px 139px 106px 139px 90px; margin-left: 39px; }
.menus b { font-weight: 600; letter-spacing: .6px; }
.extras { display: flex; margin-left: auto; padding-right: 42px; }
.extras svg { height: 43px; }
.x-par { width: 32px; }
.x-bt { width: 21px; margin-left: 33px; }
.x-wifi { width: 44px; margin-left: 28px; }
.pct { font-size: 24px; letter-spacing: -.6px; margin-left: 19px; width: 58px; }
.x-bat { width: 48px; }
.x-key { width: 34px; margin-left: 28px; }
.clock { letter-spacing: .55px; margin-left: 38px; width: 324px; }
.x-find { width: 34px; margin-left: 41px; }
.x-siri { width: 34px; margin-left: 30px; }
.x-list { width: 36px; margin-left: 23px; }

.window-head { height: 128px; flex: none; background: linear-gradient(#eaeaea, #cecece); border-top: 1px solid #f7f7f7; border-bottom: 2px solid #b3b0aa; border-radius: 10px 10px 0 0; display: flex; flex-direction: column; }
.titlebar { height: 43px; flex: none; display: grid; grid-template-columns: 1fr auto 1fr; align-items: center; }
.titlebar h1 { font-size: 26px; font-weight: 400; letter-spacing: .2px; color: #3a3a3a; line-height: 43px; padding-left: 2px; }
.lights { display: flex; gap: 16px; padding-left: 16px; }
.lights i { width: 24px; height: 24px; border-radius: 50%; border: 1px solid; }
.lights .close { background: radial-gradient(circle, #6a0b05 0 4px, #f67b70 5px); border-color: #dd6a5f; }
.lights .mini { background: #d6d6d6; border-color: #bdbdbd; }
.lights .full { background: #67cf66; border-color: #54b552; }
.toolbar { height: 84px; flex: none; display: flex; padding-left: 8px; }
.tool { width: 80px; height: 84px; }
.tool.wide { width: 96px; }
.tool.active { background: linear-gradient(#c5c5c5, #b6b6b6); border-radius: 9px 9px 0 0; }
.pink { font: 30px "Liberation Serif", serif; fill: #223; }
.a1 { font: bold 50px "Liberation Mono", monospace; fill: #222; }

.viewport { height: 1570px; flex: none; }
.scene { width: 2876px; height: 1570px; }

.status { height: 52px; flex: none; display: flex; align-items: center; background: #eee; padding: 0 13px; font-size: 25.5px; }
.s-ico { width: 38px; height: 38px; margin: 12px 10px 0 0; align-self: flex-start; }
.rule { width: 2px; height: 38px; background: #d3d3d3; margin: 0 9px 0 -3px; }
.help { width: 36px; height: 36px; border-radius: 50%; background: #2d5190; border: 4px solid #000; box-shadow: 0 0 0 2px #fff; margin: 12px 0 0; font: 900 27px/28px Inter, sans-serif; text-align: center; }
.hint { margin: 10px 0 0 15px; line-height: 36px; letter-spacing: .08px; }
.measure { margin: 10px 5px 0 auto; color: #7a7a7a; }
.vcb { width: 382px; height: 39px; background: #fff; border: 1px solid #b0b0b0; }

.palette { position: absolute; left: 0; top: 894px; width: 456px; height: 820px; border-radius: 10px; background: #eee; display: flex; flex-direction: column; font-size: 22.5px; box-shadow: 0 0 2px rgba(0,0,0,.6), 0 18px 36px rgba(0,0,0,.35); }
.p-head { height: 102px; flex: none; background: #f7f7f7; border-bottom: 2px solid #d2d2d2; border-radius: 10px 10px 0 0; }
.p-title { height: 32px; display: flex; }
.dots { display: flex; gap: 14px; padding: 5px 0 0 12px; }
.dots i { width: 22px; height: 22px; border-radius: 50%; background: #e0e0e0; border: 1px solid #d0d0d0; }
.p-title h2 { font-size: 22.5px; font-weight: 400; color: #a8a8a8; line-height: 33px; margin-left: 88px; }
.tabs { display: flex; padding-left: 8px; }
.tab { width: 64px; height: 68px; display: block; }
.tab.on { background: #e6e6e6; border-radius: 7px 7px 0 0; }
.wheel { width: 38px; height: 38px; margin: 11px 0 0 13px; border-radius: 50%; background: radial-gradient(circle, #fff 0, rgba(255,255,255,.55) 35%, rgba(255,255,255,0) 70%), conic-gradient(from 0deg, #c8e840, #f5d040 35deg, #f04050 90deg, #e040c0 130deg, #6030e0 180deg, #2050f0 210deg, #40d0f0 265deg, #40d860 320deg, #c8e840); }

.p-body { flex: 1; padding: 21px 10px 0 18px; display: flex; flex-direction: column; }
.nav-row { display: flex; height: 34px; padding-left: 4px; margin-bottom: 15px; }
.n-ico { width: 28px; height: 34px; margin-right: 8px; }
.select { height: 34px; display: flex; background: #fff; border-radius: 7px; border: 1px solid #c6c6c6; border-bottom-color: #aaa; overflow: hidden; justify-content: space-between; line-height: 33px; color: #1b1b1b; }
.select span { padding-left: 14px; }
.select b { width: 29px; height: 34px; margin: -1px -1px 0 0; background: linear-gradient(#7bb3f8, #3b80f6); }
.select b svg { width: 29px; height: 34px; }
.library { width: 316px; margin-left: -1px; }
.swatches { width: 428px; height: 392px; flex: none; border: 2px solid #c8c8c8; display: grid; grid-template-columns: repeat(4, 102px); grid-auto-rows: 98px; gap: 4px; }
.tile { width: 102px; height: 98px; background: #fff; }
.tile.picked { background: #a1b1ca; }
.popups { display: flex; gap: 18px; margin: 17px 0 0 -3px; }
.short { width: 156px; }
.op-label { margin: 33px 0 0 2px; line-height: 28px; letter-spacing: -.1px; color: #000; }
.op-row { display: flex; margin-top: 1px; }
.slider { width: 320px; height: 38px; margin: -1px 0 0 2px; }
.pct-field { width: 86px; height: 36px; margin-left: 9px; padding-left: 2px; background: #fff; border: 1px solid #b0b0b0; line-height: 36px; text-align: center; color: #1b1b1b; }
.p-foot { height: 88px; flex: none; border-top: 2px solid #d6d6d6; display: flex; padding: 16px 0 0 20px; }
.current { width: 54px; height: 54px; border-radius: 11px; }
.dropper { width: 34px; height: 35px; margin: 9px 0 0 14px; }
.wells { display: grid; grid-template-columns: repeat(10, 26px); grid-auto-rows: 26px; gap: 2px; margin-left: 14px; }
.wells i { border: 2px solid #d6d6d6; border-radius: 4px; }
```
FILE: scene.js
```js
const NS = 'http://www.w3.org/2000/svg';
let seed = 7;
const rnd = () => (seed = (seed * 16807) % 2147483647) / 2147483647;
const pick = list => list[Math.floor(rnd() * list.length)];
const byId = id => document.getElementById(id);

function add(parent, d, fill, stroke, width) {
  const p = document.createElementNS(NS, 'path');
  p.setAttribute('d', d);
  p.setAttribute('fill', fill || 'none');
  if (stroke) { p.setAttribute('stroke', stroke); p.setAttribute('stroke-width', width); }
  parent.appendChild(p);
}

// Courses of random-width blocks; joints go on last so that no block covers them.
function courses(g, x, y, w, h, o) {
  const joints = [];
  let top = y;
  for (let bottom = y + (o.first || o.row); top < y + h; bottom += o.row) {
    const end = Math.min(bottom, y + h);
    for (let cx = x; cx < x + w;) {
      const right = Math.min(cx + o.min + rnd() * (o.max - o.min), x + w);
      add(g, `M${cx} ${top}H${right}V${end}H${cx}Z`, pick(o.colors));
      if (o.edge && right < x + w) add(g, `M${right} ${top}V${end}`, null, o.edge, 2);
      cx = right;
    }
    if (end < y + h) joints.push(end);
    top = end;
  }
  joints.forEach(j => add(g, `M${x} ${j}H${x + w}`, null, o.joint, o.jointWidth));
}

const stone = ['#938e86', '#8d8580', '#9d9a90', '#887f7c', '#a19c92', '#908983'];
courses(byId('asphalt'), 1032, 552, 270, 258, { first: 42, row: 59, min: 45, max: 95, colors: stone, edge: '#807973', joint: '#45403d', jointWidth: 7 });
courses(byId('strips'), 378, 936, 306, 102, { row: 11.3, min: 12, max: 45, colors: ['#9095a5', '#a8a09e', '#b5aa9c', '#858b9b', '#a5a6ae'], joint: '#75757f', jointWidth: 2.5 });
courses(byId('shakes'), 1020, 840, 294, 294, { row: 36.7, min: 12, max: 36, colors: ['#c5b98c', '#bdb084', '#cdc296', '#b9ac80', '#c7b789'], edge: '#a3966c', joint: '#857a54', jointWidth: 3 });
courses(byId('slate'), 66, 1146, 294, 294, { row: 84, min: 80, max: 100, colors: ['#7d868c', '#828a90', '#7a8b91', '#86848b'], edge: '#65727a', joint: '#8fa2a6', jointWidth: 3 });

// Side wall: joints run from the rear edge down to the front corner.
const rear = [92, 155, 248, 330, 410, 500, 575, 660, 742, 825, 905, 988, 1075, 1158, 1238, 1320, 1400];
const corner = [122, 190, 285, 375, 462, 550, 640, 728, 820, 908, 995, 1085, 1165, 1258, 1345, 1432, 1530];
const side = byId('side');
const at = (k, v) => rear[k] + (corner[k] - rear[k]) * (v - 58) / 172;
for (let i = 0; i < rear.length - 1; i++) {
  for (let x = 50; x < 240;) {
    const r = x + 18 + rnd() * 30;
    add(side, `M${x} ${at(i, x)}L${r} ${at(i, r)}V${at(i + 1, r)}L${x} ${at(i + 1, x)}Z`, pick(['#57524b', '#5d584f', '#514c47', '#635e53', '#59534d']));
    x = r;
  }
}
for (let i = 1; i < rear.length; i++) add(side, `M50 ${at(i, 50)}L240 ${at(i, 240)}`, null, '#292420', 9);

// Front frame: top rail, bottom rail and three stiles.
const front = byId('front');
const brick = ['#8a807a', '#837975', '#948c7f', '#9a9182', '#867c75', '#8f867b'];
add(front, 'M220 90H1510V1530H220Z', '#877d73');
function stile(l, r, joints, slope) {
  for (let i = 0; i < joints.length - 1; i++) {
    const split = i % 3 !== 0 ? l + (r - l) * (.35 + rnd() * .3) : r;
    add(front, `M${l} ${joints[i]}H${split}V${joints[i + 1]}H${l}Z`, pick(brick));
    if (split < r) {
      add(front, `M${split} ${joints[i]}H${r}V${joints[i + 1]}H${split}Z`, pick(brick));
      add(front, `M${split} ${joints[i]}V${joints[i + 1]}`, null, '#6a6159', 3);
    }
  }
  joints.forEach(y => add(front, `M${l} ${y + slope}L${r} ${y - slope}`, null, '#2e2823', 9));
}
stile(226, 330, [190, 282, 375, 461, 550, 638, 730, 823, 905, 994, 1083, 1170, 1262, 1346, 1436], 3);
stile(826, 916, [181, 268, 357, 441, 528, 615, 703, 790, 877, 963, 1048, 1135, 1220, 1303, 1390], 3);
stile(1388, 1508, [166, 255, 342, 425, 511, 596, 680, 765, 848, 932, 1016, 1098, 1182, 1264, 1350], 3);
function rail(top, bottom) {
  const total = 1285;
  for (let x = 0; x < total;) {
    const r = Math.min(x + 70 + rnd() * 85, total);
    const t = v => top[0] + (top[1] - top[0]) * v / total;
    const b = v => bottom[0] + (bottom[1] - bottom[0]) * v / total;
    add(front, `M${x + 226} ${t(x)}L${r + 226} ${t(r)}V${b(r)}L${x + 226} ${b(x)}Z`, pick(brick));
    x = r;
  }
}
rail([122, 96], [188, 166]);
rail([1434, 1340], [1522, 1422]);
add(front, 'M226 190L1505 166', null, '#2e2823', 7);

// Six-pencil box in the palette tabs.
['#d8453c', '#c9a227', '#3aa832', '#45b0e8', '#2438d8', '#cc3ad0'].forEach((c, i) => {
  const x = 642 + i * 18.2;
  add(byId('pencils'), `M${x} 219V172H${x + 17}V219Z`, c);
  add(byId('pencils'), `M${x} 172L${x + 6} 152H${x + 11}L${x + 17} 172Z`, '#ecd3a8');
  add(byId('pencils'), `M${x + 5} 157L${x + 8.500} 144L${x + 12} 157Z`, c);
});
```
